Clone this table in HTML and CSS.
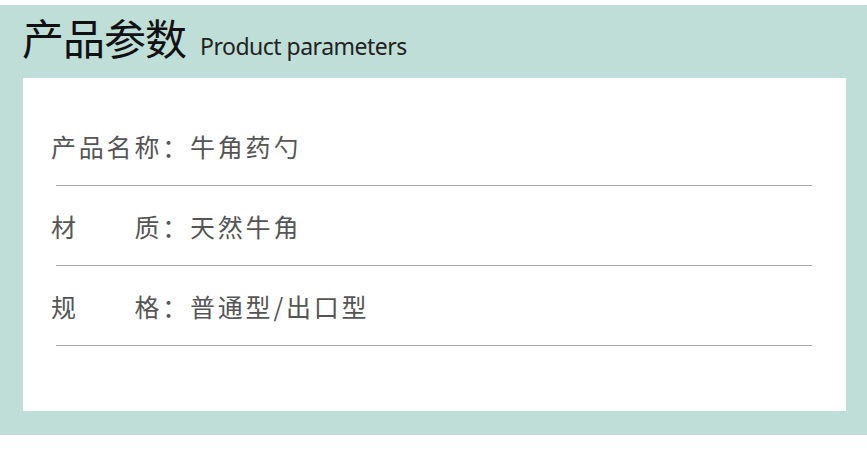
FILE: index.html
```html
<!DOCTYPE html>
<html lang="zh">
<head>
<meta charset="utf-8">
<link rel="stylesheet" href="styles.css">
</head>
<body>
<section class="panel">
  <header class="head">
    <h1 class="title">产品参数</h1>
    <span class="subtitle">Product parameters</span>
  </header>
  <div class="card">
    <div class="row"><div class="text">产品名称：牛角药勺</div><div class="line"></div></div>
    <div class="row"><div class="text">材　　质：天然牛角</div><div class="line"></div></div>
    <div class="row"><div class="text">规　　格：普通型/出口型</div><div class="line"></div></div>
  </div>
</section>
</body>
</html>
```
FILE: styles.css
```css
html, body {
  margin: 0;
  padding: 0;
  background: #ffffff;
}
body {
  font-family: "Noto Sans CJK SC", "Noto Sans", sans-serif;
}
.panel {
  margin-top: 5px;
  height: 430px;
  background: #bfded8;
  padding: 0 21px 0 23px;
  box-sizing: border-box;
}
.head {
  height: 73px;
  display: flex;
  align-items: baseline;
  padding-top: 4px;
  box-sizing: border-box;
}
.title {
  margin: 0;
  font-size: 42px;
  font-weight: 400;
  color: #111111;
  line-height: 56px;
  margin-left: -1px;
  letter-spacing: -1px;
}
.subtitle {
  margin-left: 14px;
  font-family: "Noto Sans", sans-serif;
  font-size: 23px;
  letter-spacing: -0.5px;
  color: #222222;
}
.card {
  background: #ffffff;
  height: 333px;
  padding-top: 28px;
  box-sizing: border-box;
}
.row {
  height: 80px;
  display: flex;
  flex-direction: column;
}
.text {
  height: 79px;
  display: flex;
  align-items: center;
  padding-left: 28px;
  font-size: 25px;
  letter-spacing: 2.8px;
  color: #555555;
}
.line {
  height: 1px;
  background: #aaaaaa;
  margin: 0 34px 0 33px;
}
```
